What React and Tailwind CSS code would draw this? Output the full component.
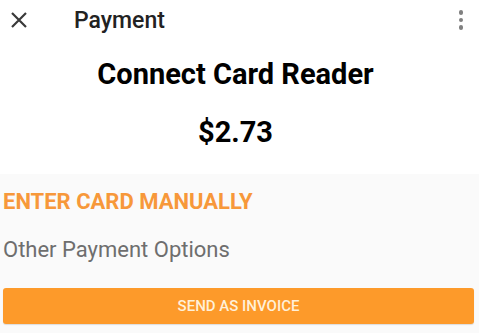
export default function App() {
  return (
    <div className="w-[479px] h-[333px] bg-white flex flex-col overflow-hidden" style={{ fontFamily: 'Roboto, "Noto Sans", sans-serif' }}>
      <div className="h-10 flex items-center shrink-0">
        <svg className="ml-[11px] w-4 h-4" viewBox="0 0 16 16" fill="none" stroke="#3a3a3a" strokeWidth="2.2" strokeLinecap="butt">
          <path d="M1 1L15 15M15 1L1 15" />
        </svg>
        <span className="ml-[47px] text-[23px] leading-none font-medium text-[#222]">Payment</span>
        <div className="ml-auto mr-[16px] flex flex-col gap-[3px]">
          <span className="block w-[4.5px] h-[4.5px] rounded-full bg-[#808080]" />
          <span className="block w-[4.5px] h-[4.5px] rounded-full bg-[#808080]" />
          <span className="block w-[4.5px] h-[4.5px] rounded-full bg-[#808080]" />
        </div>
      </div>
      <div className="mt-[20px] pr-2 text-center text-[29px] leading-none font-bold text-black">Connect Card Reader</div>
      <div className="mt-[29px] pr-2 text-center text-[29px] leading-none font-bold text-black">$2.73</div>
      <div className="mt-[27px] flex-1 bg-[#fafafa] px-[3px] pt-[17px] flex flex-col">
        <div className="text-[22px] leading-none font-bold text-[#f7983a]">ENTER CARD MANUALLY</div>
        <div className="mt-[26px] text-[22px] leading-none text-[#6e6e6e]">Other Payment Options</div>
        <button className="mt-[27px] mr-[2px] h-9 rounded-[3px] bg-[#fd9a2a] text-[15px] font-medium text-[#fff0d8] flex items-center justify-center shadow-[0_1px_1px_rgba(0,0,0,0.12)]">
          SEND AS INVOICE
        </button>
      </div>
    </div>
  );
}
